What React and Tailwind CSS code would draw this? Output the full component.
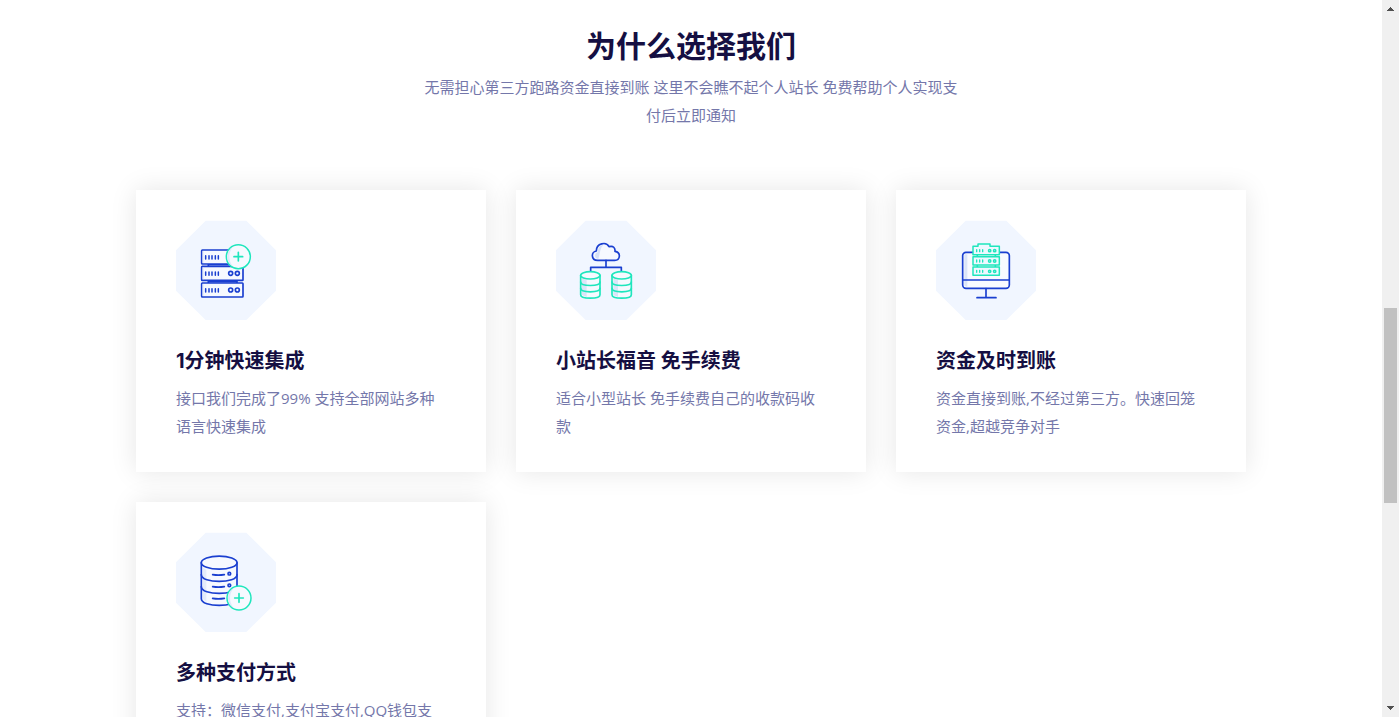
const BLUE = '#1a3fd0';
const TEAL = '#1fe6bd';

function IconFrame({ label, children }) {
  return (
    <svg
      viewBox="18 15 300 300"
      className="size-[100px]"
      role="img"
      aria-label={label}
      fill="none"
      strokeWidth="5"
      strokeLinecap="round"
      strokeLinejoin="round"
    >
      <path d="M107 17H229L318 106V227L229 315H107L18 227V106Z" fill="#f1f6ff" />
      {children}
    </svg>
  );
}

function RackUnit({ y, ports }) {
  return (
    <g stroke={BLUE}>
      <rect x="95" y={y} width="124" height="42" rx="2" fill="#f6f9ff" />
      <path d={`M99 ${y + 4}V${y + 38}`} stroke="#dbe5f8" strokeWidth="3" />
      <path
        d={`M107 ${y + 17}v10M117 ${y + 17}v10M126 ${y + 17}v10M136 ${y + 17}v10M145 ${y + 17}v10`}
        strokeWidth="4.5"
      />
      {ports && (
        <>
          <circle cx="182" cy={y + 21} r="6" />
          <circle cx="202" cy={y + 21} r="6" />
        </>
      )}
    </g>
  );
}

function PlusBadge({ cx, cy }) {
  return (
    <g stroke={TEAL}>
      <circle cx={cx} cy={cy} r="36" fill="#f6f9ff" strokeWidth="4.5" />
      <path d={`M${cx - 16} ${cy - 29}a33 33 0 0 0 0 58a44 44 0 0 1 0 -58`} fill="#dfe8fa" stroke="none" />
      <path d={`M${cx - 13} ${cy}h26M${cx} ${cy - 13}v26`} />
    </g>
  );
}

function ServerPlusIcon() {
  return (
    <IconFrame label="服务器">
      <path d="M115 147v7M201 147v7M115 196v8M201 196v8M115 149h86M115 200h86" stroke={BLUE} />
      <RackUnit y={105} />
      <RackUnit y={154} ports />
      <RackUnit y={204} ports />
      <PlusBadge cx={205} cy={125} />
    </IconFrame>
  );
}

function SmallDatabase({ x }) {
  return (
    <g stroke={TEAL} strokeWidth="5">
      <path d={`M${x} 181V239c0 14 58 14 58 0V181`} fill="#f6f9ff" />
      <path d={`M${x + 4} 190v50l14 6v-50z`} fill="#dbe5f8" stroke="none" />
      <ellipse cx={x + 29} cy="181" rx="29" ry="11" fill="#f6f9ff" />
      <path d={`M${x} 201c0 14 58 14 58 0M${x} 220c0 14 58 14 58 0`} />
    </g>
  );
}

function CloudDatabaseIcon() {
  return (
    <IconFrame label="云数据库">
      <path
        d="M143 136C122 136 123 110 139 108C139 84 169 79 177 95C190 91 196 99 195 109C214 112 211 136 194 136Z"
        fill="#f6f9ff"
        stroke={BLUE}
      />
      <path d="M144 132c-13-4-10-17-1-20c1-15 9-22 16-22c-10 12-9 28-14 42z" fill="#d6e1f7" />
      <path d="M168 137v20M122 169V157H214V169" stroke={BLUE} strokeLinecap="square" />
      <SmallDatabase x={92} />
      <SmallDatabase x={186} />
    </IconFrame>
  );
}

function TealUnit({ y, first }) {
  const top = first
    ? `M129 ${y}H144V${y - 7}H180V${y}H208V${y + 25}H129Z`
    : `M129 ${y}H208V${y + 25}H129Z`;
  return (
    <g stroke={TEAL} strokeWidth="4.5">
      <path d={top} fill="#eef8ff" />
      <path d={`M140 ${y + 10}v6M149 ${y + 10}v6M158 ${y + 10}v6`} strokeWidth="4" />
      <circle cx="179" cy={y + 13} r="3.5" />
      <circle cx="194" cy={y + 13} r="3.5" />
    </g>
  );
}

function MonitorIcon() {
  return (
    <IconFrame label="显示器">
      <rect x="98" y="112" width="140" height="108" rx="10" fill="#f8faff" stroke={BLUE} />
      <path d="M103 118h9v97q-9 0-9-8z" fill="#dbe5f8" />
      <path d="M99 195H238M168 221v26M141 248H198" stroke={BLUE} />
      <path d="M142 118v8M196 118v8M142 150v7M196 150v7" stroke={TEAL} />
      <TealUnit y={94} first />
      <TealUnit y={125} />
      <TealUnit y={156} />
    </IconFrame>
  );
}

function DatabasePlusIcon() {
  return (
    <IconFrame label="数据库">
      <g stroke={BLUE}>
        <path d="M94 107V215C94 242 201 242 201 215V107" fill="#f6f9ff" />
        <path d="M99 122V216l10 8V129z" fill="#e3ebfa" stroke="none" />
        <ellipse cx="147.500" cy="107" rx="53.500" ry="19.500" fill="#f6f9ff" />
        <path d="M94 143C94 170 201 170 201 143M94 179C94 206 201 206 201 179" />
        <path d="M128 143Q145 146 163 143M128 179Q145 182 163 179M128 214Q145 217 163 214" />
        <circle cx="178" cy="140" r="4" />
        <circle cx="178" cy="175" r="4" />
      </g>
      <PlusBadge cx={207} cy={213} />
    </IconFrame>
  );
}

const features = [
  { Icon: ServerPlusIcon, title: '1分钟快速集成', text: '接口我们完成了99% 支持全部网站多种语言快速集成' },
  { Icon: CloudDatabaseIcon, title: '小站长福音 免手续费', text: '适合小型站长 免手续费自己的收款码收款' },
  { Icon: MonitorIcon, title: '资金及时到账', text: '资金直接到账,不经过第三方。快速回笼资金,超越竞争对手' },
  { Icon: DatabasePlusIcon, title: '多种支付方式', text: '支持：微信支付,支付宝支付,QQ钱包支付' },
];

function FeatureCard({ Icon, title, text }) {
  return (
    <article className="bg-white px-10 pt-[30px] pb-8 shadow-[0_0_25px_rgba(0,0,0,0.1)]">
      <Icon />
      <h3 className="mt-[25px] font-[Inter,'Noto_Sans_CJK_SC',sans-serif] text-xl leading-8 font-bold text-[#150f42]">
        {title}
      </h3>
      <p className="mt-[7px] text-[15px] leading-7 text-[#7477aa]">{text}</p>
    </article>
  );
}

function ScrollRail() {
  return (
    <div aria-hidden="true" className="flex w-[17px] shrink-0 flex-col items-center bg-[#f0f0f0]">
      <svg className="h-[17px] w-[17px] shrink-0" viewBox="0 0 17 17" shapeRendering="crispEdges">
        <path d="M8 7h1v1h1v1h1v1h1v1H5v-1h1V9h1V8h1z" fill="#505050" />
      </svg>
      <div className="flex w-[13px] flex-1 flex-col">
        <div className="flex-[291]" />
        <div className="flex-[195] bg-[#c1c1c1]" />
        <div className="flex-[197]" />
      </div>
      <svg className="h-[17px] w-[17px] shrink-0" viewBox="0 0 17 17" shapeRendering="crispEdges">
        <path d="M5 6h7v1h-1v1h-1v1H9v1H8V9H7V8H6V7H5z" fill="#505050" />
      </svg>
    </div>
  );
}

export default function App() {
  return (
    <div className="flex h-screen overflow-hidden bg-white font-['Open_Sans','Noto_Sans_CJK_SC',sans-serif]">
      <main className="min-w-0 flex-1 overflow-hidden pt-6">
        <header className="mx-auto max-w-[540px] text-center">
          <h2 className="text-3xl leading-[44px] font-bold text-[#150f42]">为什么选择我们</h2>
          <p className="mt-[5px] text-[15px] leading-7 text-[#7477aa]">
            无需担心第三方跑路资金直接到账 这里不会瞧不起个人站长 免费帮助个人实现支付后立即通知
          </p>
        </header>
        <section className="mx-auto mt-[61px] grid max-w-[1110px] grid-cols-3 gap-[30px]">
          {features.map((feature) => (
            <FeatureCard key={feature.title} {...feature} />
          ))}
        </section>
      </main>
      <ScrollRail />
    </div>
  );
}
